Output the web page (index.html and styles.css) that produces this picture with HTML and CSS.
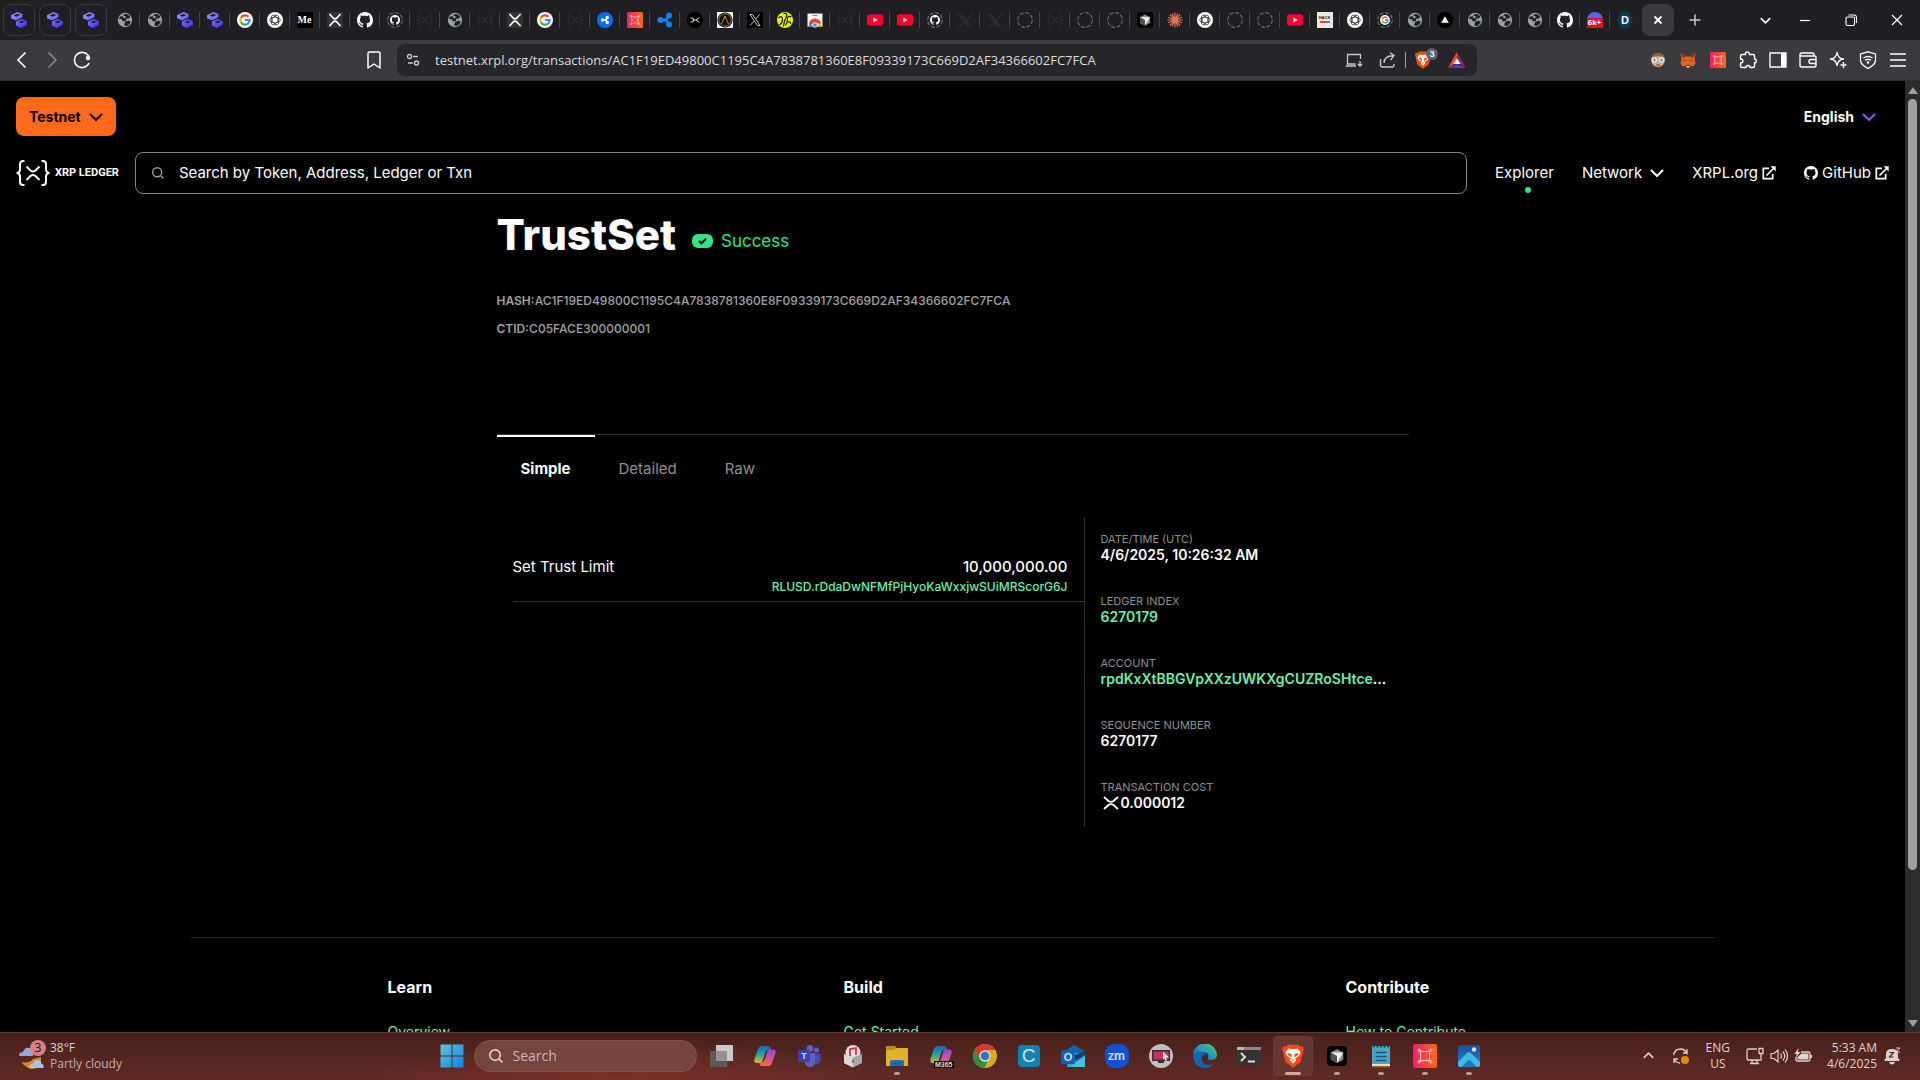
FILE: index.html
```html
<!DOCTYPE html>
<html lang="en">
<head>
    <meta charset="UTF-8">
    <meta name="viewport" content="width=device-width, initial-scale=1.0">
    <title>XRPL Explorer - TrustSet</title>
    <link rel="stylesheet" href="styles.css">
</head>
<body>

<!-- Icon sprite -->
<svg class="sprite" aria-hidden="true">
    <defs>
        <linearGradient id="g-violet" x1="0" y1="0" x2="1" y2="1"><stop offset="0" stop-color="#9c9bff"/><stop offset="1" stop-color="#3a2bff"/></linearGradient>
        <linearGradient id="g-pink" x1="0" y1="0" x2="1" y2="0"><stop offset="0" stop-color="#f01f72"/><stop offset="1" stop-color="#ff6a13"/></linearGradient>
        <linearGradient id="g-win" x1="0" y1="0" x2="1" y2="1"><stop offset="0" stop-color="#5fc4d8"/><stop offset="1" stop-color="#0a84e8"/></linearGradient>
        <linearGradient id="g-cop1" x1="0" y1="0" x2="0" y2="1"><stop offset="0" stop-color="#1565c8"/><stop offset=".5" stop-color="#22a89a"/><stop offset="1" stop-color="#d9b62b"/></linearGradient>
        <linearGradient id="g-cop2" x1="0" y1="0" x2="0" y2="1"><stop offset="0" stop-color="#8a4be0"/><stop offset=".6" stop-color="#d9518f"/><stop offset="1" stop-color="#f0733c"/></linearGradient>
        <linearGradient id="g-edge" x1="0" y1="1" x2="1" y2="0"><stop offset="0" stop-color="#0c59a4"/><stop offset=".5" stop-color="#1b9bc4"/><stop offset="1" stop-color="#5fd04f"/></linearGradient>
        <linearGradient id="g-photo" x1="0" y1="0" x2="0" y2="1"><stop offset="0" stop-color="#1b4f9c"/><stop offset="1" stop-color="#2a7fd6"/></linearGradient>
    </defs>

    <symbol id="i-stack" viewBox="0 0 16 16">
        <path fill="url(#g-violet)" d="M0 3.200 6.500 0 11.500 2v3.200L5 8.500 0 6.200zM5 9.500 11 7l5 2.600v3.200L9.800 16 5 13.500z"/>
        <path fill="#202024" d="M2.500 3.600 6.500 1.700l2.700 1.200L5.200 4.800zM7.800 10 11.100 8.600l2.500 1.200-3.400 1.400z"/>
    </symbol>
    <symbol id="i-globe" viewBox="0 0 16 16">
        <circle cx="8" cy="8" r="7.200" fill="#9aa0a6"/>
        <path fill="#202024" d="M7.200 2.200 10 2l3.300 2.300L12 6.500H9.500L8.800 9 6 9.500 4.500 7H1.900L3 4.500l3-.3zM8.500 9.500l3-.7 2.500 1-2 3L9.500 14l-2-.2v-2z"/>
        <path fill="#9aa0a6" d="M6.300 3.500 9 4.500 8 6.500l-2-.7z"/>
    </symbol>
    <symbol id="i-google" viewBox="0 0 16 16">
        <circle cx="8" cy="8" r="8" fill="#fff"/>
        <g fill="none" stroke-width="2.200"><path stroke="#ea4335" d="M3.900 5.800A4.700 4.700 0 0 1 11.400 4.800"/><path stroke="#fbbc05" d="M3.900 5.800a4.700 4.700 0 0 0 0 4.400"/><path stroke="#34a853" d="M3.900 10.200a4.700 4.700 0 0 0 7.200 1.300"/><path stroke="#4285f4" d="M8 8h4.700a4.700 4.700 0 0 1-1.600 3.500"/></g>
    </symbol>
    <symbol id="i-gpt" viewBox="0 0 16 16">
        <circle cx="8" cy="8" r="8" fill="#fff"/>
        <g fill="none" stroke="#333" stroke-width=".8"><ellipse cx="8" cy="8" rx="5.300" ry="2.900"/><ellipse cx="8" cy="8" rx="5.300" ry="2.900" transform="rotate(60 8 8)"/><ellipse cx="8" cy="8" rx="5.300" ry="2.900" transform="rotate(120 8 8)"/></g>
    </symbol>
    <symbol id="i-xrp" viewBox="0 0 16 16">
        <rect width="16" height="16" fill="#333"/>
        <path fill="none" stroke="#fff" stroke-width="1.700" d="m2.500 2 3.600 4q1.900 1.700 3.800 0l3.600-4m-11 12 3.600-4q1.900-1.700 3.800 0l3.600 4"/>
    </symbol>
    <symbol id="i-octocat" viewBox="0 0 16 16">
        <path fill="currentColor" d="M8 0C3.580 0 0 3.580 0 8c0 3.540 2.290 6.530 5.470 7.590.4.070.55-.17.55-.38 0-.19-.01-.82-.01-1.490-2.010.37-2.530-.49-2.690-.94-.09-.23-.48-.94-.82-1.130-.28-.15-.68-.52-.01-.53.63-.01 1.080.58 1.230.82.72 1.210 1.870.87 2.330.66.07-.52.28-.87.51-1.070-1.780-.2-3.640-.89-3.640-3.950 0-.87.31-1.590.82-2.150-.08-.2-.36-1.020.08-2.120 0 0 .67-.21 2.200.82.64-.18 1.320-.27 2-.27s1.360.09 2 .27c1.530-1.040 2.200-.82 2.200-.82.44 1.100.16 1.920.08 2.120.51.56.82 1.270.82 2.150 0 3.070-1.870 3.750-3.650 3.950.29.25.54.73.54 1.480 0 1.070-.01 1.930-.01 2.200 0 .21.15.46.55.38A8.010 8.010 0 0 0 16 8c0-4.420-3.580-8-8-8"/>
    </symbol>
    <symbol id="i-ring" viewBox="0 0 16 16"><circle cx="8" cy="8" r="7.300" fill="none" stroke="#6a6b70" stroke-width="1.200" stroke-dasharray="4 1.730"/></symbol>
    <symbol id="i-octoring" viewBox="0 0 16 16"><use href="#i-ring" width="16" height="16"/><use href="#i-octocat" x="3" y="3" width="10" height="10"/></symbol>
    <symbol id="i-gring" viewBox="0 0 16 16"><use href="#i-ring" width="16" height="16"/><use href="#i-google" x="3" y="3" width="10" height="10"/></symbol>
    <symbol id="i-braces" viewBox="0 0 16 16">
        <path fill="none" stroke="#2f3437" d="M3.500 2Q2 2 2 4v2q0 2-1.500 2Q2 8 2 10v2q0 2 1.500 2m9-12q1.500 0 1.500 2v2q0 2 1.500 2Q14 8 14 10v2q0 2-1.500 2M5 5l2 2q1 1 2 0l2-2m-6 6 2-2q1-1 2 0l2 2"/>
    </symbol>
    <symbol id="i-dimx" viewBox="0 0 16 16"><path fill="none" stroke="#2b3236" stroke-width="1.300" d="m1 2 9 11q2 2 5 1M15 2 5 13q-2 2-4 1M4 2l8 11"/></symbol>
    <symbol id="i-ripple" viewBox="0 0 16 16"><path stroke="currentColor" stroke-width="2.500" d="M4 8h5l3-4M9 8l3 4"/><g fill="currentColor"><circle cx="3.500" cy="8" r="3"/><circle cx="12" cy="3.500" r="3"/><circle cx="12" cy="12.500" r="3"/><circle cx="9" cy="8" r="2"/></g></symbol>
    <symbol id="i-rippleblue" viewBox="0 0 16 16"><circle cx="8" cy="8" r="8" fill="#0a6cff"/><use href="#i-ripple" x="3.500" y="3.500" width="9" height="9" color="#fff"/></symbol>
    <symbol id="i-node" viewBox="0 0 16 16">
        <rect width="16" height="16" rx="1.500" fill="url(#g-pink)"/>
        <path fill="none" stroke="#ffc7c0" stroke-width=".8" d="M4.300 4.300Q8 6 11.700 4.300 10 8 11.700 11.700 8 10 4.300 11.700 6 8 4.300 4.300z"/>
        <g fill="#ff6a4d" stroke="#ffc7c0" stroke-width=".6"><circle cx="4" cy="4" r=".7"/><circle cx="12" cy="4" r=".7"/><circle cx="4" cy="12" r=".7"/><circle cx="12" cy="12" r=".7"/></g>
    </symbol>
    <symbol id="i-dx" viewBox="0 0 16 16"><circle cx="8" cy="8" r="8" fill="#000"/><path fill="none" stroke="#ddd" d="M3.500 6q3.500-.5 3.500 2t-3.500 2M12.500 5.500 9 8l3.500 2.500M5.500 8H9"/></symbol>
    <symbol id="i-crest" viewBox="0 0 16 16"><path fill="#fff" d="M0 0h16v16H0z"/><circle cx="8" cy="8" r="7.600" fill="#111"/><circle cx="8" cy="8" r="6.200" fill="none" stroke="#c98b32" stroke-width=".8"/><path fill="none" stroke="#b9843a" d="m4.500 12 3.500-8 3.500 8M8 4v3"/></symbol>
    <symbol id="i-twx" viewBox="0 0 16 16"><path fill="#000" d="M0 0h16v16H0z"/><path fill="none" stroke="#ddd" stroke-width=".9" d="M3 2.500h2.500l7.500 11h-2.500zM12.500 2.500 8.700 7M7 9.200l-4 4.300"/></symbol>
    <symbol id="i-lime" viewBox="0 0 16 16"><circle cx="8" cy="8" r="8" fill="#e8f01c"/><path fill="none" stroke="#171800" stroke-width="1.200" d="M1.500 6q4-3 4 1t-3 6M6.500 1.500q5-1 2.500 4t-2.500 9M14.500 5q-4-2-4 2t-2 6.500M11 10q3-1 2.500 2"/></symbol>
    <symbol id="i-store" viewBox="0 0 16 16"><path fill="#f1f3f4" d="M.5 1.500h15v13H.5z"/><path fill="#8a8d91" d="M5.500 3h5v1h-5zM.5 14h15v1H.5z"/><path fill="#ea4335" d="M2 13a6 6 0 0 1 12-1l-6-1z"/><path fill="#34a853" d="M2 14.500v-3l4 1.500v1.500z"/><path fill="#fbbc05" d="M10 13l4-1.500v3h-4z"/><circle cx="8" cy="13" r="2.300" fill="#4285f4" stroke="#fff" stroke-width=".8"/></symbol>
    <symbol id="i-youtube" viewBox="0 0 16 16"><rect y="2.300" width="16" height="11.400" rx="2.600" fill="#ff0033"/><path fill="#fff" d="m6.300 5.500 4.300 2.500-4.300 2.500z"/></symbol>
    <symbol id="i-cursor" viewBox="0 0 16 16"><rect width="16" height="16" rx="3.500" fill="#000"/><path fill="#8f8f8f" d="m8 2.500 5 2.700v5.700L8 13.500l-5-2.600V5.200z"/><path fill="#f2f2f2" d="M3 5.200h10L8 13.500V8z"/><path fill="#555" d="M3 5.200 8 8v5.500l-5-2.600z"/></symbol>
    <symbol id="i-claude" viewBox="0 0 16 16"><path stroke="#d97757" stroke-width="1.100" d="M8 .5v15M.3 8h15.400M2.800 2.500l10.400 11M13.200 2.500l-10.400 11M5.200 1.200l5.600 13.600M10.800 1.200 5.200 14.800M1.200 5.200l13.600 5.600M14.800 5.200 1.200 10.800"/></symbol>
    <symbol id="i-vercel" viewBox="0 0 16 16"><circle cx="8" cy="8" r="8" fill="#000"/><path fill="#fff" d="m8 4.300 3.800 6.500H4.200z"/></symbol>
    <symbol id="i-lion" viewBox="0 0 16 16"><path fill="#fb4b12" d="M4.500.5h7l1.500 1.200 1.500-.2.700 2.500-.5 1L13 12l-5 3.800L3 12 1.300 5l-.5-1 .7-2.500 1.500.2z"/><path fill="#fff" d="M5 3 8 3.500 11 3l2 2.500-1 2.500-2.500 1.500.5 1.500L8 13l-2-2 .5-1.500L4 8 3 5.500z"/><path fill="#fb4b12" d="m4.500 6 2.300.5L7.300 9l-2.500-1.500zm7 0-2.300.5L8.700 9l2.500-1.500zM7 10.300h2L8 11.300z"/></symbol>

    <symbol id="i-back" viewBox="0 0 18 18"><path fill="none" stroke="currentColor" stroke-width="1.600" d="m12.500 1.500-7.500 7.500 7.500 7.500"/></symbol>
    <symbol id="i-forward" viewBox="0 0 18 18"><path fill="none" stroke="#8a8a8e" stroke-width="1.500" d="m5.500 1.500 7.500 7.500-7.500 7.500"/></symbol>
    <symbol id="i-reload" viewBox="0 0 18 18"><path fill="none" stroke="currentColor" stroke-width="1.600" d="M15.800 5.500A7.600 7.600 0 1 0 16 12"/><circle cx="15" cy="7" r="2.200" fill="currentColor"/></symbol>
    <symbol id="i-bookmark" viewBox="0 0 18 18"><path fill="none" stroke="currentColor" stroke-width="1.500" stroke-linejoin="round" d="M4.500 1h9q1.500 0 1.500 1.500v14.500l-6-4-6 4V2.500Q3 1 4.500 1z"/></symbol>
    <symbol id="i-tune" viewBox="0 0 14 14"><g fill="none" stroke="currentColor" stroke-width="1.400"><circle cx="3.500" cy="3.500" r="2"/><circle cx="10.500" cy="10" r="2"/><path d="M7 3.500h5M2 10h5"/></g></symbol>
    <symbol id="i-install" viewBox="0 0 18 18"><path fill="none" stroke="currentColor" stroke-width="1.300" d="M15.500 8V3.500h-13V13h8M1 15h10M15 10v5M12.700 12.800 15 15l2.300-2.200"/></symbol>
    <symbol id="i-share" viewBox="0 0 18 18"><path fill="none" stroke="currentColor" stroke-width="1.400" d="M1.500 8v6q0 2 2 2H13q2 0 2-2v-1M5 12q0-7 9-7.300M11 1.500l4 3.200L11.500 9"/></symbol>
    <symbol id="i-bat" viewBox="0 0 18 16"><path fill="#ff4b1f" d="M9 0 0 16l9-6z"/><path fill="#8e1f75" d="m9 0 9 16-9-6z"/><path fill="#5a37c8" d="m0 16 9-4 9 4z"/><path fill="#fff" d="m9 6.500 3.600 5.500H5.400z"/></symbol>
    <symbol id="i-face" viewBox="0 0 16 16"><circle cx="8" cy="8" r="7" fill="#d9a878"/><path fill="#8a6238" d="M1.500 5.500Q4 .5 8 .8t6.500 4.700Q8 3 1.500 5.500z"/><g fill="#a8dcea" stroke="#f0f0f0" stroke-width=".8"><circle cx="4.500" cy="8" r="2.400"/><circle cx="11.500" cy="8" r="2.400"/></g><path fill="#8a4030" d="M6 12.500h4v1H6z"/><circle cx="4.500" cy="8" r=".8" fill="#345"/><circle cx="11.500" cy="8" r=".8" fill="#345"/></symbol>
    <symbol id="i-fox" viewBox="0 0 16 16"><path fill="#e2641b" d="M.8 1 6.500 4.500h3L15.200 1l-.7 6.500 1 4-2.500 3-3-.8H6l-3 .8-2.500-3 1-4z"/><path fill="#7c3512" d="M.8 1 6 4.600 3 6zM15.200 1 10 4.600 13 6z"/><path fill="#2a3a48" d="m4.500 7.500 2 1.500-1.800.3zm7 0-2 1.500 1.800.3zM6.500 13h3l-.5 1.300H7z"/><path fill="#d6c0b3" d="M6 14h4l-1 1.700H7z"/></symbol>
    <symbol id="i-puzzle" viewBox="0 0 18 18"><path fill="none" stroke="currentColor" stroke-width="1.400" stroke-linejoin="round" d="M3 3.500h3.500Q6 1 8.300 1t2 2.500H14q1.500 0 1.500 1.500v3q1.800 0 1.800 1.900t-1.800 1.900V15q0 1.500-1.500 1.500h-3q0-2-2-2t-2 2H3Q1.500 16.500 1.500 15v-3q2.300 0 2.300-2t-2.300-2V5Q1.500 3.500 3 3.500z"/></symbol>
    <symbol id="i-panel" viewBox="0 0 18 18"><path fill="none" stroke="currentColor" stroke-width="1.400" d="M1 2h16v14H1z"/><path fill="currentColor" d="M12 2h5v14h-5z"/></symbol>
    <symbol id="i-wallet" viewBox="0 0 18 18"><path fill="none" stroke="currentColor" stroke-width="1.400" d="M1 5V3.500Q1 2 2.500 2h11q1.500 0 1.500 1.500V5M1 5h14q2 0 2 1.500v8q0 1.500-1.500 1.500h-13Q1 16 1 14.500zM17 8.500h-5q-2 0-2 2t2 2h5"/></symbol>
    <symbol id="i-sparkle" viewBox="0 0 18 18"><path fill="none" stroke="currentColor" stroke-width="1.400" stroke-linejoin="round" d="M8 1.500q1 6 6.500 6.500Q9 8.500 8 14.500 7 8.500 1.500 8 7 7.500 8 1.500z"/><path stroke="currentColor" stroke-width="1.500" d="M14.500 11v6M11.500 14h6"/></symbol>
    <symbol id="i-vpn" viewBox="0 0 18 18"><g fill="none" stroke="currentColor" stroke-width="1.300"><path d="M9 .8 16.500 3v6q0 5-7.500 8.300Q1.500 14 1.500 9V3zM4.500 7q4.500-3 9 0M6 9.300q3-2 6 0"/></g><circle cx="9" cy="11.500" r="1.300" fill="currentColor"/></symbol>
    <symbol id="i-menu" viewBox="0 0 18 18"><path stroke="currentColor" stroke-width="1.500" d="M1 3h16M1 9h16M1 15h16"/></symbol>
    <symbol id="i-close" viewBox="0 0 12 12"><path stroke="currentColor" stroke-width="1.300" d="m1 1 10 10M11 1 1 11"/></symbol>
    <symbol id="i-tabclose" viewBox="0 0 12 12"><path stroke="currentColor" stroke-width="1.800" d="m2.500 2.500 7 7M9.500 2.500l-7 7"/></symbol>
    <symbol id="i-plus" viewBox="0 0 12 12"><path stroke="#c8c8cc" stroke-width="1.500" d="M6 .5v11M.5 6h11"/></symbol>
    <symbol id="i-min" viewBox="0 0 12 12"><path stroke="currentColor" stroke-width="1.200" d="M1 6.500h10"/></symbol>
    <symbol id="i-restore" viewBox="0 0 12 12"><path fill="none" stroke="currentColor" stroke-width="1.100" d="M1 4.500Q1 3 2.500 3H8q1.500 0 1.500 1.500V10q0 1.500-1.500 1.500H2.500Q1 11.500 1 10zM3.500 1H9q2.500 0 2.500 2.500V9"/></symbol>
    <symbol id="i-chevron" viewBox="0 0 14 8"><path fill="none" stroke="currentColor" stroke-width="2" d="m1 1 6 6 6-6"/></symbol>
    <symbol id="i-magnify" viewBox="0 0 12 12"><path fill="none" stroke="currentColor" stroke-width="1.400" d="M9.700 5.200a4.500 4.500 0 1 1-9 0 4.500 4.500 0 0 1 9 0zM8.300 8.300l3.200 3.200"/></symbol>
    <symbol id="i-external" viewBox="0 0 14 14"><path fill="none" stroke="currentColor" stroke-width="1.700" d="M7 2.300H1.300v10.400h9.400V8M4.500 9.500 12 2"/><path fill="currentColor" d="M8.500.3h5.200v5.200z"/></symbol>
    <symbol id="i-logo" viewBox="0 0 34 26"><g fill="none" stroke="#fff" stroke-width="2"><path d="M8.500 1H7Q4 1 4 4.500V9q0 4-3.500 4Q4 13 4 17v4.500Q4 25 7 25h1.500M25.500 1H27q3 0 3 3.500V9q0 4 3.500 4Q30 13 30 17v4.500q0 3.500-3 3.500h-1.500"/><path d="m10.500 6.500 4 4q2.500 2 5 0l4-4m-13 13.500 4-4q2.500-2 5 0l4 4"/></g></symbol>
    <symbol id="i-drop" viewBox="0 0 16 14"><path fill="none" stroke="#fff" stroke-width="1.800" d="m1 1 4.500 4q2.500 1.800 5 0L15 1M1 13l4.500-4q2.500-1.800 5 0l4.500 4"/></symbol>
    <symbol id="i-ok" viewBox="0 0 21 14"><rect width="21" height="14" rx="6" fill="#32e685"/><path fill="none" stroke="#000" stroke-width="2" d="m7 7 2.500 2.300L14 4.700"/></symbol>

    <symbol id="t-win" viewBox="0 0 24 24"><path fill="url(#g-win)" d="M.5.5h11v11H.5zM12.500.5h11v11h-11zM.5 12.500h11v11H.5zM12.500 12.500h11v11h-11z"/></symbol>
    <symbol id="t-view" viewBox="0 0 24 24"><path fill="#c9c9c9" d="M7 1h17v16H7z"/><path fill="#5c5a59" d="M1 7h17v16H1z"/><path fill="#96918f" d="M7 7h11v10H7z"/></symbol>
    <symbol id="t-copilot" viewBox="0 0 24 24"><path fill="url(#g-cop1)" d="M8.500 2H15q2 0 2.700 2.500L18 6h-3q-2 0-2.800 2.500L9.500 17q-.8 2-3 2H4q-3.500 0-2.500-4L5 5q1-3 3.500-3z"/><path fill="url(#g-cop2)" d="M15.500 22H9q-2 0-2.700-2.500L6 18h3q2 0 2.800-2.500L14.500 7q.8-1.500 3-1.500H20q3.500 0 2.500 4L19 19q-1 3-3.500 3z"/></symbol>
    <symbol id="t-teams" viewBox="0 0 24 24"><g fill="#5b62c4"><circle cx="13" cy="4.500" r="3.500"/><circle cx="19.500" cy="6" r="2.500"/><path d="M8 9h10v9q0 5-5 5t-5-5z"/></g><path fill="#444bb0" d="M18 9.500h5.500V16q0 4-5.500 4z"/><rect x="1" y="6" width="12" height="12" rx="1" fill="#3c42a6"/></symbol>
    <symbol id="t-music" viewBox="0 0 24 24"><circle cx="12" cy="8.500" r="7.500" fill="#e6e2e3"/><path fill="none" stroke="#d0325c" stroke-width="1.800" d="M9 12V5l6-1v7"/><path fill="#a9a9a9" d="m3 10 9 3.500 9-3.500v9l-9 4.500L3 19z"/><path fill="#d8d8d8" d="m3 10 9 3.500v10L3 19z"/><path stroke="#666" stroke-width="1.500" d="M12 15.500V19"/></symbol>
    <symbol id="t-folder" viewBox="0 0 24 24"><path fill="#c28a10" d="M1 2h9l2 2.500h11V8H1z"/><path fill="#e3b02c" d="M1 6h8l2-2h12v18H1z"/><path fill="#1173b8" d="M5 22v-4q0-2 2-2h10q2 0 2 2v4z"/><path fill="#0a5590" d="M8 19h8v1.500H8z"/></symbol>
    <symbol id="t-chrome" viewBox="0 0 24 24"><circle cx="12" cy="12" r="12" fill="#dba91e"/><path fill="#cf3a2e" d="M1.600 6A12 12 0 0 1 22.400 6H12a6 6 0 0 0-5 9z"/><path fill="#2b8f44" d="M1.600 6 7 15a6 6 0 0 0 7.500 2.500L11.500 24A12 12 0 0 1 1.600 6z"/><circle cx="12" cy="12" r="5.600" fill="#ddd"/><circle cx="12" cy="12" r="4.300" fill="#2c6fd6"/></symbol>
    <symbol id="t-outlook" viewBox="0 0 24 24"><path fill="#1565ae" d="M4 7 13 1l10 6v4H4z"/><path fill="#2a9fd8" d="M6 9h18v14H6z"/><path fill="#0b3d74" d="m12 12 12-5v4l-9 6z"/><path fill="#45c1e0" d="M9 23 24 12v11z"/><rect y="6" width="14" height="14" rx="1.500" fill="#0d61b8"/></symbol>
    <symbol id="t-capture" viewBox="0 0 24 24"><circle cx="12" cy="12" r="12" fill="#bfbfbf"/><path fill="#333" d="M3 6h18v11H3zM9 17h6v2H9z"/><path fill="#d12d5b" d="M4.500 7.500h15v8h-15z"/><path fill="#eee" d="m14 7.500 6 6-3 .2 1 2.800-1.500.5-1-2.700-1.500 1.500z"/></symbol>
    <symbol id="t-edge" viewBox="0 0 24 24"><path fill="url(#g-edge)" d="M0 12A12 12 0 0 1 24 11q0 5-6 5-4 0-3-2 1.500-6-5-6-8 0-10 4z"/><path fill="#1167b1" d="M0 12q2-4 8-4 4 0 5.500 2Q7 11 9 17q2 4 7 4 3 0 5-1-4 4.500-10 4Q1 23 0 12z"/></symbol>
    <symbol id="t-term" viewBox="0 0 24 24"><path fill="#343434" d="M0 3h24v18H0z"/><path fill="#8d8987" d="M0 3h24v3H0z"/><path fill="#b8b5b3" d="M0 3h7v3H0z"/><path fill="none" stroke="#ddd" stroke-width="2" d="m4 9 4 4-4 4M11 17.500h7"/></symbol>
    <symbol id="t-note" viewBox="0 0 24 24"><path fill="#4ba6c2" d="M3 2h18v20H3z"/><path fill="#e4e0dc" d="M3 20h18v2H3z"/><path fill="#a45d10" d="M3 22h18v1.500H3z"/><path stroke="#0f5776" stroke-width="1.700" d="M6.500 8.500h11M6.500 12.500h11M6.500 16.500h11"/><path stroke="#123c50" stroke-width="1.500" d="M5 .5v3M8.500.5v3M12 .5v3M15.500.5v3M19 .5v3"/></symbol>
    <symbol id="t-photos" viewBox="0 0 24 24"><rect x="1" y="1" width="22" height="22" rx="2" fill="url(#g-photo)"/><path fill="#3dbbe0" d="m1 18 9-9q2-1.500 4 0l9 9v3q0 2-2 2H3q-2 0-2-2z"/><path fill="#1c78c0" d="m5 23 5-6q2-2 4 0l6 6z"/><circle cx="17" cy="5.500" r="2.200" fill="#e0e0e0"/></symbol>
    <symbol id="t-weather" viewBox="0 0 26 28"><path fill="#d98a1e" d="M3 20q8 2 12-3l8-2v7q-4 5-9 5T3 20z"/><path fill="#8fa9da" d="M1 14q0-4 4-4 2-5 6-4 3 0 4 4v4z"/><path fill="#a9c0ea" d="M11 26q0-4 3.500-4 1-4 5-4t4 4q2.500 0 2 4z"/></symbol>
    <symbol id="t-sync" viewBox="0 0 18 18"><path fill="none" stroke="currentColor" stroke-width="1.300" d="M1.500 8Q3 2 8.500 2q4 0 6.500 4V2m0 4h-4M2 16v-4h4m-4 0q2 4 6 4"/><circle cx="13" cy="13" r="4" fill="#e08a00"/></symbol>
    <symbol id="t-monitor" viewBox="0 0 18 18"><path fill="none" stroke="currentColor" stroke-width="1.300" d="M11 2H2.500Q1 2 1 3.500v8Q1 13 2.500 13H14M6 13v3m5-3v3m-7 .5h9M13 1.500h4v5h-4zM15 7v7"/></symbol>
    <symbol id="t-sound" viewBox="0 0 18 18"><path fill="none" stroke="currentColor" stroke-width="1.200" d="M1 6.500v5h3l4 3.500V3L4 6.500zM10.500 6.500q2 2.500 0 5M12.800 4.500q4 4.500 0 9M15 2.500q5 6.500 0 13"/></symbol>
    <symbol id="t-battery" viewBox="0 0 18 18"><path fill="none" stroke="currentColor" stroke-width="1.300" d="M7 5h7.500Q16 5 16 6.500v6q0 1.500-1.500 1.500h-11Q2 14 2 12.500V10M17.300 8v3"/><path fill="currentColor" d="M7.500 6.500H14.500v6h-11V10zM4.500 1 .5 7h2.300L1.500 11 6.500 5H4z"/></symbol>
    <symbol id="t-bell" viewBox="0 0 18 18"><path fill="currentColor" d="M1.500 14v-1.500L3 11V7q0-5 6-5t6 5v4l1.500 1.500V14zM6 15h6q-1 2.500-3 2.500T6 15z"/><path fill="none" stroke="#4d231f" stroke-width="1.200" d="M6.500 5.500h4l-4 4.500h4"/><path fill="none" stroke="currentColor" d="M13 1h4l-4 4h4"/></symbol>
</svg>

<div class="tab-strip">
    <div class="pinned">
        <button aria-label="Pinned tab"><svg><use href="#i-stack"/></svg></button>
        <button aria-label="Pinned tab"><svg><use href="#i-stack"/></svg></button>
        <button aria-label="Pinned tab"><svg><use href="#i-stack"/></svg></button>
    </div>
    <div class="tabs">
        <button aria-label="Tab"><svg><use href="#i-globe"/></svg></button>
        <button aria-label="Tab"><svg><use href="#i-globe"/></svg></button>
        <button aria-label="Tab"><svg><use href="#i-stack"/></svg></button>
        <button aria-label="Tab"><svg><use href="#i-stack"/></svg></button>
        <button aria-label="Google"><svg><use href="#i-google"/></svg></button>
        <button aria-label="ChatGPT"><svg><use href="#i-gpt"/></svg></button>
        <button aria-label="Medium"><span class="fav medium">Me</span></button>
        <button aria-label="XRP"><svg><use href="#i-xrp"/></svg></button>
        <button aria-label="GitHub"><svg><use href="#i-octocat"/></svg></button>
        <button aria-label="GitHub"><svg><use href="#i-octoring"/></svg></button>
        <button aria-label="XRPL"><svg><use href="#i-braces"/></svg></button>
        <button aria-label="Tab"><svg><use href="#i-globe"/></svg></button>
        <button aria-label="XRPL"><svg><use href="#i-braces"/></svg></button>
        <button aria-label="XRP"><svg><use href="#i-xrp"/></svg></button>
        <button aria-label="Google"><svg><use href="#i-google"/></svg></button>
        <button aria-label="XRPL"><svg><use href="#i-braces"/></svg></button>
        <button aria-label="Ripple"><svg><use href="#i-rippleblue"/></svg></button>
        <button aria-label="Tab"><svg><use href="#i-node"/></svg></button>
        <button aria-label="Ripple" class="ripple"><svg><use href="#i-ripple"/></svg></button>
        <button aria-label="Tab"><svg><use href="#i-dx"/></svg></button>
        <button aria-label="Tab"><svg><use href="#i-crest"/></svg></button>
        <button aria-label="X"><svg><use href="#i-twx"/></svg></button>
        <button aria-label="Tab"><svg><use href="#i-lime"/></svg></button>
        <button aria-label="Web Store"><svg><use href="#i-store"/></svg></button>
        <button aria-label="XRPL"><svg><use href="#i-braces"/></svg></button>
        <button aria-label="YouTube"><svg><use href="#i-youtube"/></svg></button>
        <button aria-label="YouTube"><svg><use href="#i-youtube"/></svg></button>
        <button aria-label="GitHub"><svg><use href="#i-octoring"/></svg></button>
        <button aria-label="Tab"><svg><use href="#i-dimx"/></svg></button>
        <button aria-label="Tab"><svg><use href="#i-dimx"/></svg></button>
        <button aria-label="Tab"><svg><use href="#i-ring"/></svg></button>
        <button aria-label="XRPL"><svg><use href="#i-braces"/></svg></button>
        <button aria-label="Tab"><svg><use href="#i-ring"/></svg></button>
        <button aria-label="Tab"><svg><use href="#i-ring"/></svg></button>
        <button aria-label="Cursor"><svg><use href="#i-cursor"/></svg></button>
        <button aria-label="Claude"><svg><use href="#i-claude"/></svg></button>
        <button aria-label="ChatGPT"><svg><use href="#i-gpt"/></svg></button>
        <button aria-label="Tab"><svg><use href="#i-ring"/></svg></button>
        <button aria-label="Tab"><svg><use href="#i-ring"/></svg></button>
        <button aria-label="YouTube"><svg><use href="#i-youtube"/></svg></button>
        <button aria-label="Hack"><span class="fav hack">HACK</span></button>
        <button aria-label="ChatGPT"><svg><use href="#i-gpt"/></svg></button>
        <button aria-label="Google"><svg><use href="#i-gring"/></svg></button>
        <button aria-label="Tab"><svg><use href="#i-globe"/></svg></button>
        <button aria-label="Vercel"><svg><use href="#i-vercel"/></svg></button>
        <button aria-label="Tab"><svg><use href="#i-globe"/></svg></button>
        <button aria-label="Tab"><svg><use href="#i-globe"/></svg></button>
        <button aria-label="Tab"><svg><use href="#i-globe"/></svg></button>
        <button aria-label="GitHub"><svg><use href="#i-octocat"/></svg></button>
        <button aria-label="Discord"><span class="fav discord"><span>6k+</span></span></button>
        <button aria-label="Tab"><span class="fav dhex">D</span></button>
    </div>
    <button class="tab-active" aria-label="Close tab"><svg><use href="#i-tabclose"/></svg></button>
    <button class="tab-new" aria-label="New tab"><svg><use href="#i-plus"/></svg></button>
    <div class="window-controls">
        <button class="tab-search" aria-label="Search tabs"><svg><use href="#i-chevron"/></svg></button>
        <button aria-label="Minimize"><svg><use href="#i-min"/></svg></button>
        <button aria-label="Restore"><svg><use href="#i-restore"/></svg></button>
        <button aria-label="Close"><svg><use href="#i-close"/></svg></button>
    </div>
</div>

<div class="toolbar">
    <button aria-label="Back"><svg><use href="#i-back"/></svg></button>
    <button aria-label="Forward"><svg><use href="#i-forward"/></svg></button>
    <button aria-label="Reload"><svg><use href="#i-reload"/></svg></button>
    <button class="bookmark" aria-label="Bookmark"><svg><use href="#i-bookmark"/></svg></button>
    <div class="address">
        <svg class="tune"><use href="#i-tune"/></svg>
        <input type="text" aria-label="Address" value="testnet.xrpl.org/transactions/AC1F19ED49800C1195C4A7838781360E8F09339173C669D2AF34366602FC7FCA">
        <button aria-label="Install"><svg><use href="#i-install"/></svg></button>
        <button aria-label="Share"><svg><use href="#i-share"/></svg></button>
        <span class="address-line"></span>
        <button class="shield" aria-label="Brave Shields"><svg><use href="#i-lion"/></svg><span class="shield-count">3</span></button>
        <button aria-label="Rewards"><svg><use href="#i-bat"/></svg></button>
    </div>
    <div class="extensions">
        <button aria-label="Extension"><svg><use href="#i-face"/></svg></button>
        <button aria-label="MetaMask"><svg><use href="#i-fox"/></svg></button>
        <button aria-label="Extension"><svg><use href="#i-node"/></svg></button>
        <button aria-label="Extensions"><svg><use href="#i-puzzle"/></svg></button>
        <button aria-label="Sidebar"><svg><use href="#i-panel"/></svg></button>
        <button aria-label="Wallet"><svg><use href="#i-wallet"/></svg></button>
        <button aria-label="Leo AI"><svg><use href="#i-sparkle"/></svg></button>
        <button aria-label="VPN"><svg><use href="#i-vpn"/></svg></button>
        <button aria-label="Menu"><svg><use href="#i-menu"/></svg></button>
    </div>
</div>

<div class="viewport">
    <div class="page">
        <header>
            <div class="header-top">
                <button class="network-btn">Testnet <svg><use href="#i-chevron"/></svg></button>
                <button class="language-btn">English <svg><use href="#i-chevron"/></svg></button>
            </div>
            <div class="header-main">
                <a class="logo" href="#"><svg><use href="#i-logo"/></svg>XRP LEDGER</a>
                <label class="search">
                    <svg><use href="#i-magnify"/></svg>
                    <input type="text" aria-label="Search" placeholder="Search by Token, Address, Ledger or Txn">
                </label>
                <nav>
                    <a class="current" href="#">Explorer</a>
                    <a class="with-arrow" href="#">Network <svg><use href="#i-chevron"/></svg></a>
                    <a href="#">XRPL.org <svg><use href="#i-external"/></svg></a>
                    <a href="#"><svg><use href="#i-octocat"/></svg> GitHub <svg><use href="#i-external"/></svg></a>
                </nav>
            </div>
        </header>

        <main>
            <div class="title-row">
                <h1>TrustSet</h1>
                <span class="status"><svg><use href="#i-ok"/></svg>Success</span>
            </div>
            <p class="hash"><b>HASH:</b>AC1F19ED49800C1195C4A7838781360E8F09339173C669D2AF34366602FC7FCA</p>
            <p class="hash"><b>CTID:</b>C05FACE300000001</p>

            <div class="tx-tabs">
                <a class="selected" href="#simple">Simple</a>
                <a href="#detailed">Detailed</a>
                <a href="#raw">Raw</a>
            </div>

            <div class="tx-body">
                <section class="tx-simple">
                    <div class="tx-row">
                        <span>Set Trust Limit</span>
                        <div class="amount">
                            <span>10,000,000.00</span>
                            <a href="#">RLUSD.rDdaDwNFMfPjHyoKaWxxjwSUiMRScorG6J</a>
                        </div>
                    </div>
                </section>
                <dl class="tx-index">
                    <div><dt>DATE/TIME (UTC)</dt><dd>4/6/2025, 10:26:32 AM</dd></div>
                    <div><dt>LEDGER INDEX</dt><dd><a href="#">6270179</a></dd></div>
                    <div><dt>ACCOUNT</dt><dd><a href="#">rpdKxXtBBGVpXXzUWKXgCUZRoSHtce</a>...</dd></div>
                    <div><dt>SEQUENCE NUMBER</dt><dd>6270177</dd></div>
                    <div><dt>TRANSACTION COST</dt><dd><svg><use href="#i-drop"/></svg>0.000012</dd></div>
                </dl>
            </div>
        </main>

        <footer>
            <div class="learn"><h2>Learn</h2><a href="#">Overview</a></div>
            <div class="build"><h2>Build</h2><a href="#">Get Started</a></div>
            <div class="contribute"><h2>Contribute</h2><a href="#">How to Contribute</a></div>
        </footer>
    </div>
    <div class="scrollbar">
        <span class="arrow up"></span>
        <span class="thumb"></span>
        <span class="arrow down"></span>
    </div>
</div>

<div class="taskbar">
    <button class="weather">
        <svg><use href="#t-weather"/></svg>
        <span class="weather-badge">3</span>
        <span class="weather-text">38°F<br><span>Partly cloudy</span></span>
    </button>
    <div class="apps">
        <button aria-label="Start"><svg><use href="#t-win"/></svg></button>
        <label class="task-search">
            <svg><use href="#i-magnify"/></svg>
            <input type="text" aria-label="Search" placeholder="Search">
        </label>
        <button aria-label="Task view"><svg><use href="#t-view"/></svg></button>
        <button aria-label="Copilot"><svg><use href="#t-copilot"/></svg></button>
        <button aria-label="Teams"><svg viewBox="0 0 24 24"><use href="#t-teams"/><text class="teams-t" x="7" y="15">T</text></svg></button>
        <button aria-label="Music"><svg><use href="#t-music"/></svg></button>
        <button aria-label="File Explorer" class="running"><svg><use href="#t-folder"/></svg></button>
        <button aria-label="Microsoft 365"><svg><use href="#t-copilot"/></svg><span class="m365">M365</span></button>
        <button aria-label="Chrome"><svg><use href="#t-chrome"/></svg></button>
        <button aria-label="C"><span class="app-c">C</span></button>
        <button aria-label="Outlook"><svg viewBox="0 0 24 24"><use href="#t-outlook"/><text class="outlook-o" x="7" y="17">O</text></svg></button>
        <button aria-label="Zoom"><span class="app-zoom">zm</span></button>
        <button aria-label="Capture"><svg><use href="#t-capture"/></svg></button>
        <button aria-label="Edge"><svg><use href="#t-edge"/></svg></button>
        <button aria-label="Terminal"><svg><use href="#t-term"/></svg></button>
        <button aria-label="Brave" class="running focused"><svg><use href="#i-lion"/></svg></button>
        <button aria-label="Cursor" class="running small"><svg><use href="#i-cursor"/></svg></button>
        <button aria-label="Notepad" class="running"><svg><use href="#t-note"/></svg></button>
        <button aria-label="Node" class="running"><svg><use href="#i-node"/></svg></button>
        <button aria-label="Photos" class="running"><svg><use href="#t-photos"/></svg></button>
    </div>
    <div class="tray">
        <button class="tray-up" aria-label="Show hidden icons"><svg><use href="#i-chevron"/></svg></button>
        <button class="tray-sync" aria-label="Updates"><svg><use href="#t-sync"/></svg></button>
        <button class="tray-lang">ENG<br>US</button>
        <button class="tray-status" aria-label="Network, sound, battery">
            <svg><use href="#t-monitor"/></svg>
            <svg><use href="#t-sound"/></svg>
            <svg><use href="#t-battery"/></svg>
        </button>
        <button class="tray-clock">5:33 AM<br>4/6/2025</button>
        <button aria-label="Notifications"><svg><use href="#t-bell"/></svg></button>
    </div>
</div>

</body>
</html>
```

FILE: styles.css
```css
* {
    box-sizing: border-box;
}

body {
    margin: 0;
    height: 100vh;
    display: flex;
    flex-direction: column;
    overflow: hidden;
    background-color: #000;
    color: #fff;
    font-family: Inter, "Liberation Sans", sans-serif;
    font-size: 14px;
    line-height: 20px;
}

button,
input {
    margin: 0;
    padding: 0;
    border: none;
    background: none;
    color: inherit;
    font: inherit;
}

button {
    display: flex;
    align-items: center;
    justify-content: center;
    flex: none;
}

input {
    min-width: 0;
    outline: none;
}

svg {
    display: block;
    flex: none;
    width: 16px;
    height: 16px;
}

a {
    color: inherit;
    text-decoration: none;
}

.sprite {
    position: absolute;
    width: 0;
    height: 0;
}

/* Browser tabs */
.tab-strip {
    display: flex;
    align-items: center;
    flex: none;
    height: 40px;
    background-color: #202024;
}

.pinned {
    display: flex;
    gap: 4px;
    padding: 0 3px;
}

.pinned button {
    width: 32px;
    height: 32px;
    border: 1px solid #38383d;
    border-radius: 8px;
}

.tabs {
    display: flex;
    overflow: hidden;
}

.tabs button {
    width: 30px;
    height: 16px;
    border-right: 1px solid #434348;
}

.tabs button:last-child {
    border-right: none;
}

.tabs .ripple {
    color: #0a85ff;
}

.fav {
    width: 16px;
    height: 16px;
    overflow: hidden;
    font-family: "Liberation Sans", sans-serif;
    font-weight: 700;
    line-height: 16px;
    text-align: center;
}

.medium {
    border-radius: 2px;
    background-color: #000;
    font-family: "Liberation Serif", serif;
    font-size: 10px;
}

.hack {
    background: linear-gradient(90deg, #e0483e 50%, #3287d6 50%) 3px 9px / 10px 2px no-repeat #ece8dc;
    color: #111;
    font-size: 4px;
    line-height: 12px;
}

.discord {
    padding-top: 6px;
    border-radius: 8px 8px 2px 2px;
    background-color: #5865f2;
}

.discord span {
    display: block;
    background-color: #d8141c;
    font-size: 8px;
    line-height: 10px;
}

.dhex {
    background-color: #063c55;
    clip-path: polygon(25% 0, 75% 0, 100% 50%, 75% 100%, 25% 100%, 0 50%);
    font-size: 11px;
}

.tab-active {
    width: 32px;
    height: 32px;
    margin-left: 2px;
    border-radius: 8px;
    background-color: #3b3b3f;
}

.tab-active svg,
.tab-new svg,
.window-controls svg {
    width: 12px;
    height: 12px;
}

.tab-new {
    width: 42px;
}

.window-controls {
    display: flex;
    margin-left: auto;
}

.window-controls button {
    width: 46px;
    height: 40px;
}

.window-controls .tab-search {
    width: 34px;
}

.window-controls .tab-search svg {
    width: 11px;
    height: 7px;
}

/* Toolbar */
.toolbar {
    display: flex;
    align-items: center;
    flex: none;
    height: 41px;
    padding: 0 7px;
    background-color: #3b3b3f;
    border-bottom: 1px solid #2f2f33;
}

.toolbar button {
    width: 30px;
    height: 32px;
}

.toolbar svg {
    width: 18px;
    height: 18px;
}

.toolbar .bookmark {
    margin-left: 262px;
}

.address {
    display: flex;
    align-items: center;
    flex: 1;
    height: 32px;
    margin: 0 166px 0 8px;
    padding: 0 3px 0 9px;
    border-radius: 8px;
    background-color: #27272b;
    color: #c8c8cc;
}

.address .tune {
    width: 14px;
    height: 14px;
}

.address input {
    flex: 1;
    margin-left: 15px;
    color: #dcdcdf;
    font-family: "Open Sans", sans-serif;
    font-size: 13px;
}

.address button {
    width: 34px;
}

.address-line {
    width: 1px;
    height: 16px;
    background-color: #a0a0a4;
}

.shield {
    position: relative;
}

.shield-count {
    position: absolute;
    top: 4px;
    right: 2px;
    width: 12px;
    height: 12px;
    border-radius: 6px;
    background-color: #5d6070;
    color: #fff;
    font-size: 8px;
    font-weight: 700;
    line-height: 12px;
}

.extensions {
    display: flex;
}

.extensions button:nth-child(-n+3) svg {
    width: 16px;
    height: 16px;
}

/* Page */
.viewport {
    display: flex;
    flex: 1;
    min-height: 0;
}

.page {
    flex: 1;
    overflow: hidden;
}

header {
    padding: 16px 16px 0;
}

.header-top {
    display: flex;
    justify-content: space-between;
    align-items: center;
    font-weight: 700;
}

.header-top svg {
    width: 14px;
    height: 8px;
}

.network-btn {
    gap: 8px;
    height: 39px;
    padding: 0 13px;
    border-radius: 8px;
    background-color: #ff6a1a;
    color: #000;
    font-weight: 700;
}

.language-btn {
    gap: 8px;
    margin-right: 13px;
    font-weight: 700;
}

.language-btn svg {
    color: #9a52ff;
}

.header-main {
    display: flex;
    align-items: center;
    margin-top: 16px;
}

.logo {
    display: flex;
    align-items: center;
    gap: 5px;
    font-family: Roboto, sans-serif;
    font-size: 11px;
    font-weight: 700;
}

.logo svg {
    width: 34px;
    height: 26px;
}

.search {
    display: flex;
    align-items: center;
    flex: 1;
    height: 42px;
    margin: 0 28px 0 16px;
    padding: 0 16px;
    border: 1px solid #858585;
    border-radius: 8px;
}

.search svg {
    width: 12px;
    height: 12px;
    color: #9a9a9a;
}

.search input {
    flex: 1;
    margin-left: 15px;
    font-size: 15px;
}

.search input::placeholder {
    color: #fff;
    opacity: 1;
}

nav {
    display: flex;
    gap: 28px;
}

nav a {
    position: relative;
    display: flex;
    align-items: center;
    gap: 4px;
    font-size: 15px;
}

nav svg {
    width: 14px;
    height: 14px;
}

nav .with-arrow {
    gap: 8px;
}

nav .with-arrow svg {
    height: 8px;
}

.current::after {
    content: "";
    position: absolute;
    left: 50%;
    top: 24px;
    width: 6px;
    height: 6px;
    border-radius: 50%;
    background-color: #32e685;
}

main {
    max-width: 912px;
    margin: 17px auto 0;
}

.title-row {
    display: flex;
    align-items: center;
    gap: 16px;
    margin-bottom: 28px;
}

h1 {
    margin: 0;
    font-size: 42px;
    font-weight: 800;
    line-height: 48px;
}

.status {
    display: flex;
    align-items: center;
    gap: 8px;
    margin-top: 12px;
    color: #32e685;
    font-size: 17px;
}

.status svg {
    width: 21px;
    height: 14px;
}

.hash {
    margin: 0;
    color: #a2a2a4;
    font-size: 12px;
    font-weight: 500;
    line-height: 28px;
}

.hash b {
    font-weight: 600;
}

.tx-tabs {
    display: flex;
    margin-top: 91px;
    border-top: 1px solid #343437;
    font-size: 15px;
}

.tx-tabs a {
    padding: 22px 24px;
    border-top: 2px solid transparent;
    color: #8f8f92;
}

.tx-tabs .selected {
    border-top-color: #fff;
    color: #fff;
    font-weight: 700;
}

.tx-body {
    display: flex;
    margin-top: 16px;
}

.tx-simple {
    flex: 1;
    padding: 40px 0 0 16px;
}

.tx-row {
    display: flex;
    justify-content: space-between;
    padding: 0 16px 4px 0;
    border-bottom: 1px solid #343437;
    font-size: 15px;
}

.amount {
    display: flex;
    flex-direction: column;
    align-items: flex-end;
    font-weight: 500;
}

.amount a {
    color: #6cf0a8;
    font-size: 12px;
}

.tx-index {
    width: 325px;
    margin: 0;
    padding-left: 16px;
    border-left: 1px solid #343437;
}

.tx-index div {
    padding: 15px 0;
}

.tx-index dt {
    color: #8f8f92;
    font-size: 11px;
    line-height: 14px;
}

.tx-index dd {
    display: flex;
    align-items: center;
    margin: 0;
    font-weight: 600;
    line-height: 18px;
}

.tx-index a {
    color: #6cf0a8;
}

.tx-index svg {
    height: 14px;
    margin: 0 2px;
}

footer {
    display: flex;
    justify-content: space-around;
    width: 80%;
    margin: 110px auto 0;
    padding-top: 39px;
    border-top: 1px solid #252527;
}

footer h2 {
    margin: 0 0 25px;
    font-size: 16px;
    font-weight: 700;
    line-height: 20px;
}

footer a {
    color: #6cf0a8;
}

.learn {
    width: 62px;
}

.build {
    width: 108px;
}

.contribute {
    width: 172px;
}

.scrollbar {
    display: flex;
    flex-direction: column;
    align-items: center;
    flex: none;
    width: 15px;
    padding: 6px 0 5px;
    background-color: #2c2c2c;
}

.thumb {
    width: 9px;
    height: 82%;
    margin-top: 5px;
    border-radius: 5px;
    background-color: #9f9f9f;
}

.arrow {
    border: 5px solid transparent;
}

.arrow.up {
    border-top: none;
    border-bottom: 7px solid #9f9f9f;
}

.arrow.down {
    margin-top: auto;
    border-bottom: none;
    border-top: 7px solid #9f9f9f;
}

/* Taskbar */
.taskbar {
    display: grid;
    grid-template-columns: 1fr auto 1fr;
    align-items: center;
    flex: none;
    height: 48px;
    padding-bottom: 2px;
    border-top: 1px solid #5b3a35;
    background: radial-gradient(ellipse 260px 40px at 620px 48px, #7a3128, transparent), linear-gradient(#48211d, #612a25);
    color: #dcd2d0;
    font-family: "Open Sans", sans-serif;
    font-size: 12px;
    line-height: 16px;
}

.weather {
    position: relative;
    justify-self: start;
    gap: 6px;
    padding-left: 18px;
    text-align: left;
}

.weather svg {
    width: 26px;
    height: 28px;
}

.weather-text span {
    color: #c0aeab;
}

.weather-badge {
    position: absolute;
    left: 30px;
    top: 0;
    width: 16px;
    height: 16px;
    border-radius: 8px;
    background-color: #d97f85;
    color: #2a1010;
    text-align: center;
}

.apps {
    display: flex;
    align-items: center;
}

.apps button {
    position: relative;
    width: 44px;
    height: 40px;
}

.apps button svg {
    width: 24px;
    height: 24px;
}

.apps .small svg {
    width: 20px;
    height: 20px;
}

.apps text {
    fill: #ddd;
    font-family: "Liberation Sans", sans-serif;
    font-weight: 700;
    text-anchor: middle;
}

.teams-t {
    font-size: 9px;
}

.outlook-o {
    font-size: 11px;
}

.m365 {
    position: absolute;
    right: 9px;
    bottom: 8px;
    padding: 0 1px;
    background-color: #050505;
    color: #ddd;
    font-family: "Liberation Sans", sans-serif;
    font-size: 7px;
    font-weight: 700;
    line-height: 7px;
}

.app-c,
.app-zoom {
    width: 22px;
    height: 22px;
    border-radius: 4px;
    background-color: #0885b3;
    color: #e0e0e0;
    font-family: "Liberation Sans", sans-serif;
    font-size: 19px;
    line-height: 22px;
}

.app-zoom {
    width: 24px;
    height: 24px;
    border-radius: 9px;
    background-color: #0f52d4;
    font-family: Lato, sans-serif;
    font-size: 13px;
    font-weight: 700;
}

.apps .focused {
    width: 40px;
    margin: 0 2px;
    border: 1px solid #6b3a34;
    border-radius: 4px;
    background-color: #663630;
}

.running::after {
    content: "";
    position: absolute;
    bottom: 1px;
    width: 6px;
    height: 3px;
    border-radius: 2px;
    background-color: #b09a97;
}

.focused::after {
    bottom: 0;
    width: 16px;
    background-color: #dba58f;
}

.task-search {
    display: flex;
    align-items: center;
    width: 223px;
    height: 32px;
    margin-right: 2px;
    padding: 0 14px;
    border: 1px solid #85534c;
    border-radius: 16px;
    background-color: #74443d;
}

.task-search svg {
    width: 14px;
    height: 14px;
}

.task-search input {
    flex: 1;
    margin-left: 10px;
    font-size: 14px;
}

.task-search input::placeholder {
    color: #c8b5b1;
    opacity: 1;
}

.tray {
    display: flex;
    align-items: center;
    justify-self: end;
    padding-right: 19px;
}

.tray svg {
    width: 18px;
    height: 18px;
}

.tray-up {
    margin-right: 18px;
}

.tray .tray-up svg {
    width: 11px;
    height: 7px;
    transform: rotate(180deg);
}

.tray-lang {
    margin: 0 16px;
}

.tray-status {
    gap: 6px;
}

.tray-clock {
    margin: 0 6px 0 15px;
    text-align: right;
}
```
